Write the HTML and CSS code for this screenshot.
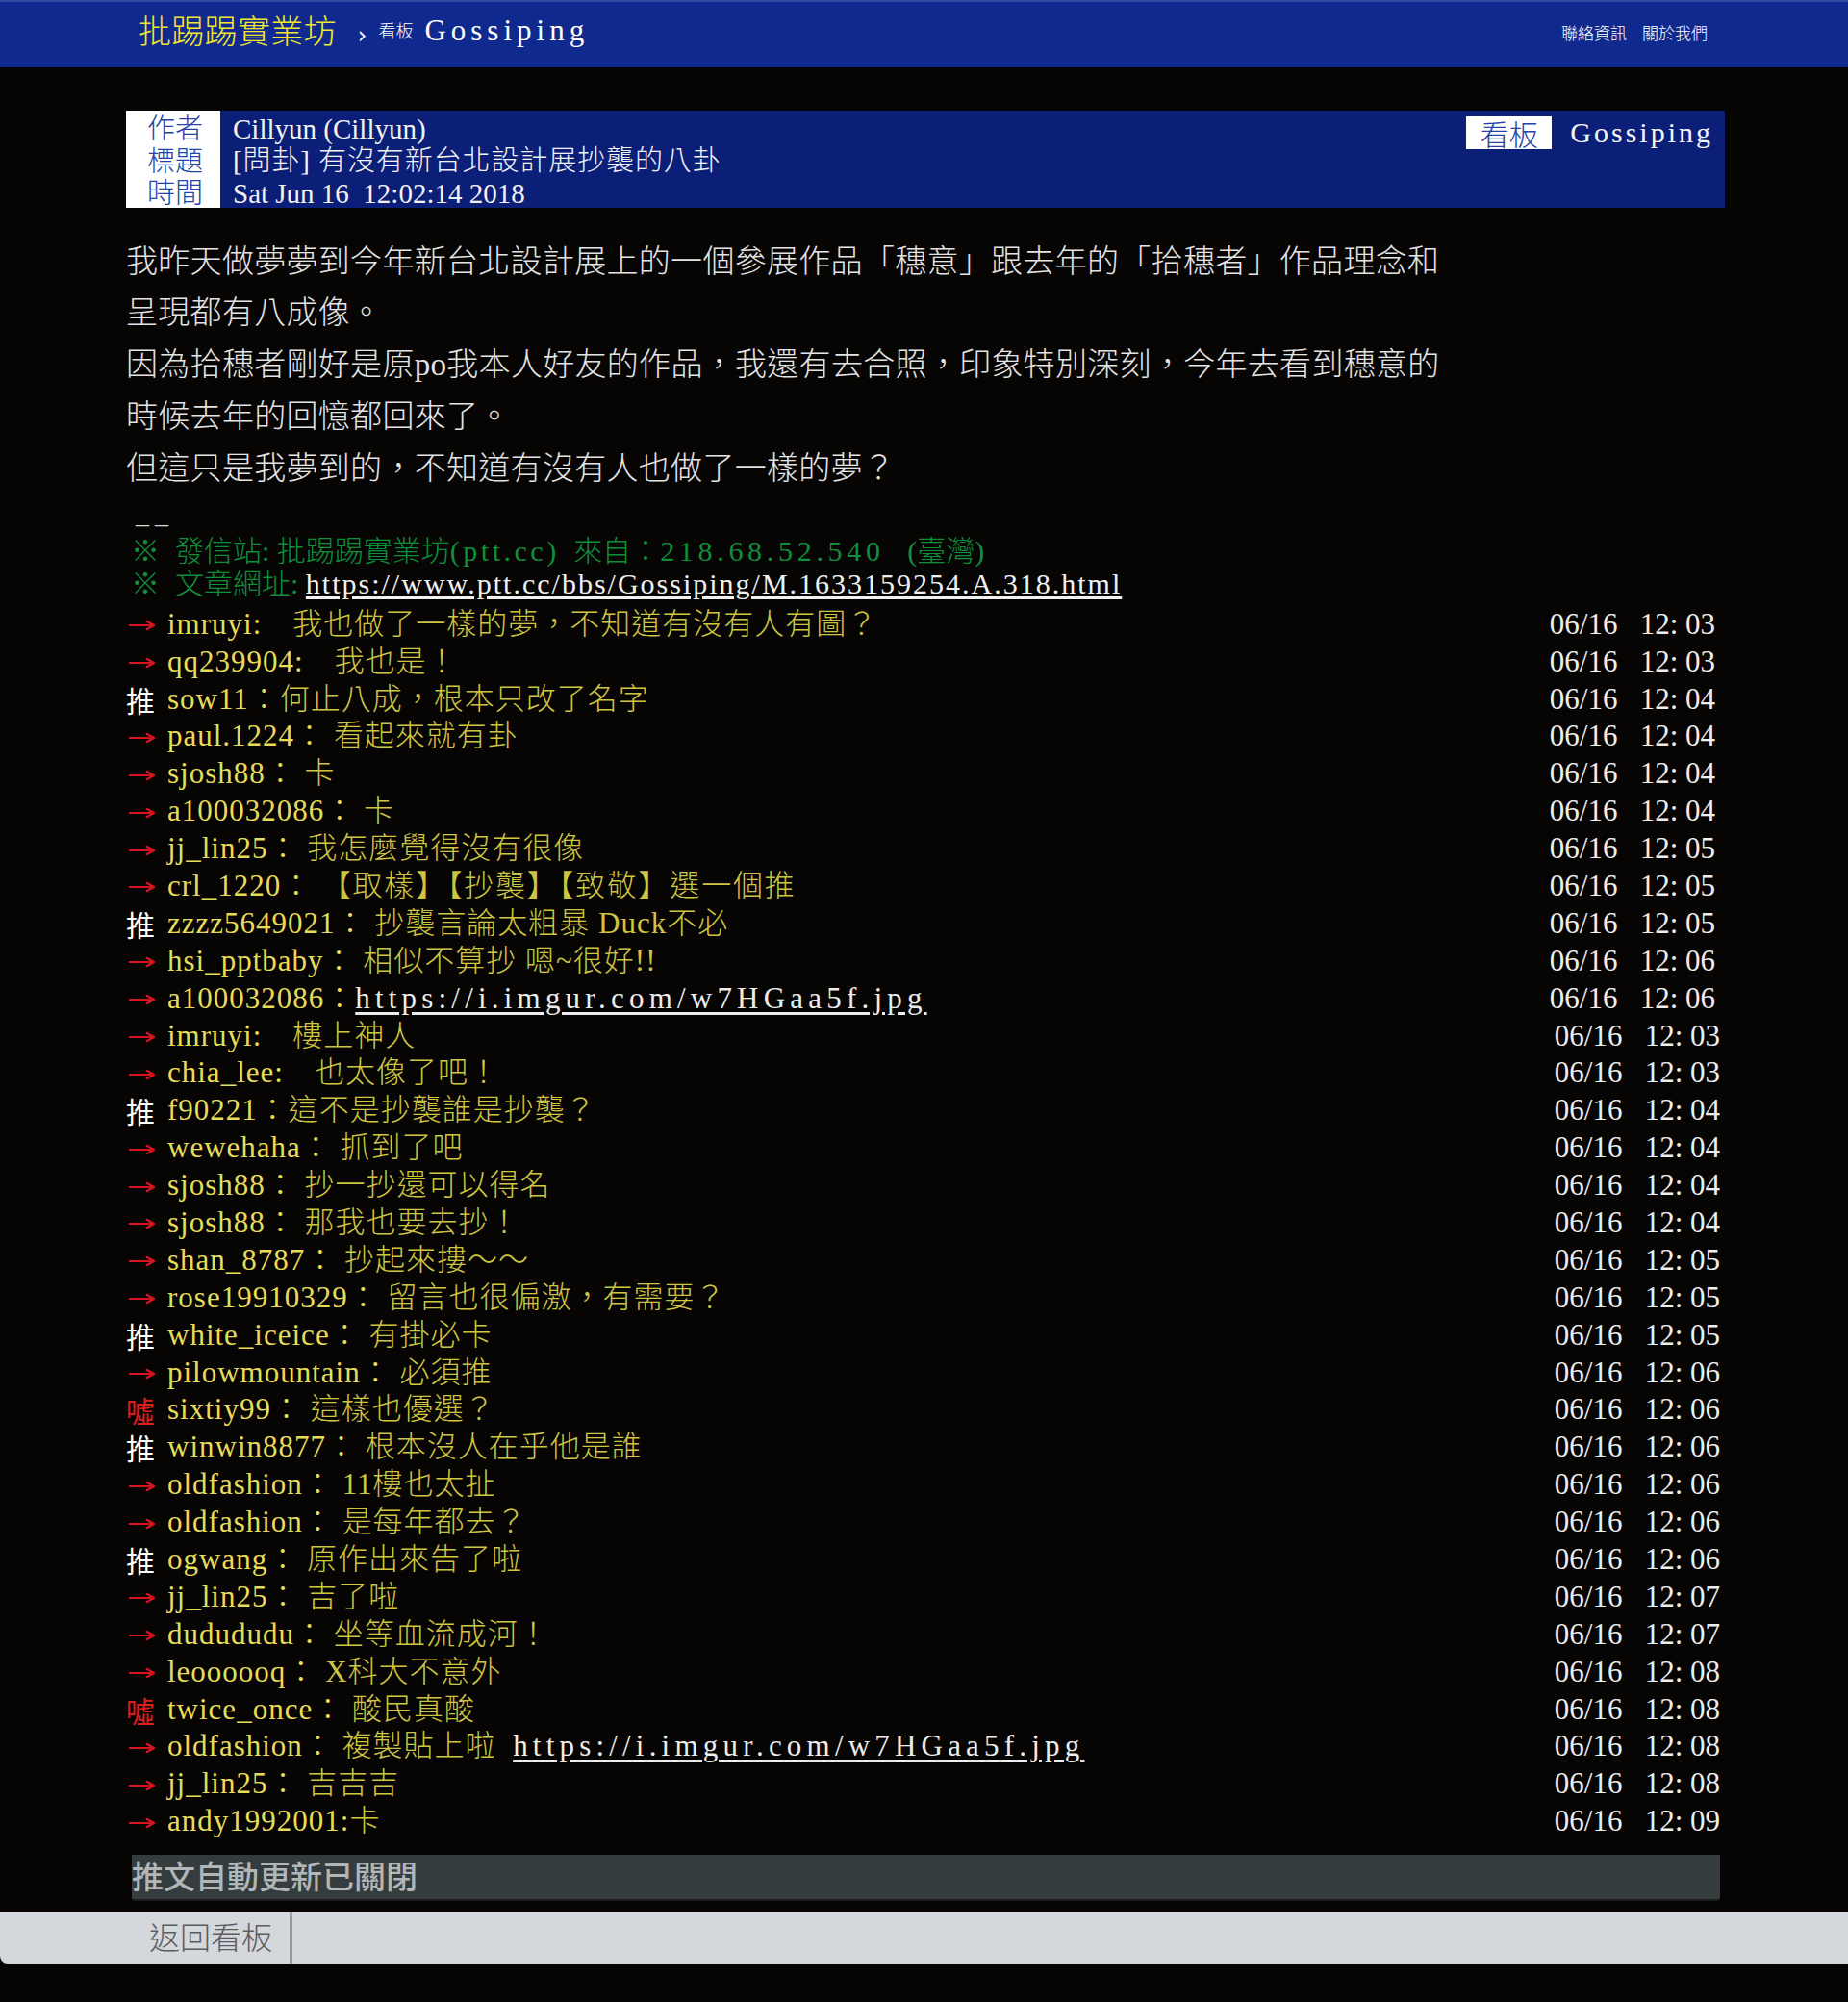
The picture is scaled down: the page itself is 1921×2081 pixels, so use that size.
FILE: index.html
```html
<!DOCTYPE html>
<html lang="zh-Hant">
<head>
<meta charset="utf-8">
<title>[問卦] 有沒有新台北設計展抄襲的八卦 - 看板 Gossiping - 批踢踢實業坊</title>
<link rel="stylesheet" href="styles.css">
</head>
<body>
<div class="topbar">
  <div class="nav-left">
    <span class="brand">批踢踢實業坊</span><span class="crumb-sep">›</span><span class="crumb-label">看板</span><span class="crumb-board">Gossiping</span>
  </div>
  <div class="nav-right">
    <span class="nav-link">聯絡資訊</span>
    <span class="nav-link">關於我們</span>
  </div>
</div>

<div class="main">
  <div class="meta">
    <div class="meta-rows">
      <div class="meta-row"><span class="meta-tag">作者</span><span class="meta-val">Cillyun (Cillyun)</span></div>
      <div class="meta-row"><span class="meta-tag">標題</span><span class="meta-val title">[問卦] 有沒有新台北設計展抄襲的八卦</span></div>
      <div class="meta-row"><span class="meta-tag">時間</span><span class="meta-val">Sat Jun 16  12:02:14 2018</span></div>
    </div>
    <div class="meta-board"><span class="board-tag">看板</span><span class="board-name">Gossiping</span></div>
  </div>

  <div class="content">
    <div class="line">我昨天做夢夢到今年新台北設計展上的一個參展作品「穗意」跟去年的「拾穗者」作品理念和</div>
    <div class="line">呈現都有八成像。</div>
    <div class="line">因為拾穗者剛好是原po我本人好友的作品，我還有去合照，印象特別深刻，今年去看到穗意的</div>
    <div class="line">時候去年的回憶都回來了。</div>
    <div class="line">但這只是我夢到的，不知道有沒有人也做了一樣的夢？</div>
  </div>

  <div class="dashes">––</div>
  <div class="sig sig-1"><span class="sym">※</span>發信站: 批踢踢實業坊<span class="ls3">(ptt.cc)</span> <span class="from">來自：</span><span class="ls4">218.68.52.540</span> <span class="region">(臺灣)</span></div>
  <div class="sig sig-2"><span class="sym">※</span>文章網址: <span class="sig-url">https://www.ptt.cc/bbs/Gossiping/M.1633159254.A.318.html</span></div>

  <div class="pushes">
    <div class="push"><span class="ptag arrow"><svg width="28" height="14" viewBox="0 0 28 14"><path d="M1 7H26M19 2.5L27 7L19 11.5" fill="none" stroke="#d8141e" stroke-width="2.2"/></svg></span><span class="puser">imruyi:　</span><span class="ptext">我也做了一樣的夢，不知道有沒有人有圖？</span><span class="ptime">06/16   12: 03</span></div>
    <div class="push"><span class="ptag arrow"><svg width="28" height="14" viewBox="0 0 28 14"><path d="M1 7H26M19 2.5L27 7L19 11.5" fill="none" stroke="#d8141e" stroke-width="2.2"/></svg></span><span class="puser">qq239904:　</span><span class="ptext">我也是！</span><span class="ptime">06/16   12: 03</span></div>
    <div class="push"><span class="ptag up">推</span><span class="puser">sow11：</span><span class="ptext">何止八成，根本只改了名字</span><span class="ptime">06/16   12: 04</span></div>
    <div class="push"><span class="ptag arrow"><svg width="28" height="14" viewBox="0 0 28 14"><path d="M1 7H26M19 2.5L27 7L19 11.5" fill="none" stroke="#d8141e" stroke-width="2.2"/></svg></span><span class="puser">paul.1224：</span><span class="ptext"> 看起來就有卦</span><span class="ptime">06/16   12: 04</span></div>
    <div class="push"><span class="ptag arrow"><svg width="28" height="14" viewBox="0 0 28 14"><path d="M1 7H26M19 2.5L27 7L19 11.5" fill="none" stroke="#d8141e" stroke-width="2.2"/></svg></span><span class="puser">sjosh88：</span><span class="ptext"> 卡</span><span class="ptime">06/16   12: 04</span></div>
    <div class="push"><span class="ptag arrow"><svg width="28" height="14" viewBox="0 0 28 14"><path d="M1 7H26M19 2.5L27 7L19 11.5" fill="none" stroke="#d8141e" stroke-width="2.2"/></svg></span><span class="puser">a100032086：</span><span class="ptext"> 卡</span><span class="ptime">06/16   12: 04</span></div>
    <div class="push"><span class="ptag arrow"><svg width="28" height="14" viewBox="0 0 28 14"><path d="M1 7H26M19 2.5L27 7L19 11.5" fill="none" stroke="#d8141e" stroke-width="2.2"/></svg></span><span class="puser">jj_lin25：</span><span class="ptext"> 我怎麼覺得沒有很像</span><span class="ptime">06/16   12: 05</span></div>
    <div class="push"><span class="ptag arrow"><svg width="28" height="14" viewBox="0 0 28 14"><path d="M1 7H26M19 2.5L27 7L19 11.5" fill="none" stroke="#d8141e" stroke-width="2.2"/></svg></span><span class="puser">crl_1220：</span><span class="ptext wide"> 【取樣】【抄襲】【致敬】選一個推</span><span class="ptime">06/16   12: 05</span></div>
    <div class="push"><span class="ptag up">推</span><span class="puser">zzzz5649021：</span><span class="ptext"> 抄襲言論太粗暴 Duck不必</span><span class="ptime">06/16   12: 05</span></div>
    <div class="push"><span class="ptag arrow"><svg width="28" height="14" viewBox="0 0 28 14"><path d="M1 7H26M19 2.5L27 7L19 11.5" fill="none" stroke="#d8141e" stroke-width="2.2"/></svg></span><span class="puser">hsi_pptbaby：</span><span class="ptext"> 相似不算抄 嗯~很好!!</span><span class="ptime">06/16   12: 06</span></div>
    <div class="push"><span class="ptag arrow"><svg width="28" height="14" viewBox="0 0 28 14"><path d="M1 7H26M19 2.5L27 7L19 11.5" fill="none" stroke="#d8141e" stroke-width="2.2"/></svg></span><span class="puser">a100032086：</span><span class="ptext"><span class="purl">https://i.imgur.com/w7HGaa5f.jpg</span></span><span class="ptime">06/16   12: 06</span></div>
    <div class="push late"><span class="ptag arrow"><svg width="28" height="14" viewBox="0 0 28 14"><path d="M1 7H26M19 2.5L27 7L19 11.5" fill="none" stroke="#d8141e" stroke-width="2.2"/></svg></span><span class="puser">imruyi:　</span><span class="ptext">樓上神人</span><span class="ptime">06/16   12: 03</span></div>
    <div class="push late"><span class="ptag arrow"><svg width="28" height="14" viewBox="0 0 28 14"><path d="M1 7H26M19 2.5L27 7L19 11.5" fill="none" stroke="#d8141e" stroke-width="2.2"/></svg></span><span class="puser">chia_lee:　</span><span class="ptext">也太像了吧！</span><span class="ptime">06/16   12: 03</span></div>
    <div class="push late"><span class="ptag up">推</span><span class="puser">f90221：</span><span class="ptext">這不是抄襲誰是抄襲？</span><span class="ptime">06/16   12: 04</span></div>
    <div class="push late"><span class="ptag arrow"><svg width="28" height="14" viewBox="0 0 28 14"><path d="M1 7H26M19 2.5L27 7L19 11.5" fill="none" stroke="#d8141e" stroke-width="2.2"/></svg></span><span class="puser">wewehaha：</span><span class="ptext"> 抓到了吧</span><span class="ptime">06/16   12: 04</span></div>
    <div class="push late"><span class="ptag arrow"><svg width="28" height="14" viewBox="0 0 28 14"><path d="M1 7H26M19 2.5L27 7L19 11.5" fill="none" stroke="#d8141e" stroke-width="2.2"/></svg></span><span class="puser">sjosh88：</span><span class="ptext"> 抄一抄還可以得名</span><span class="ptime">06/16   12: 04</span></div>
    <div class="push late"><span class="ptag arrow"><svg width="28" height="14" viewBox="0 0 28 14"><path d="M1 7H26M19 2.5L27 7L19 11.5" fill="none" stroke="#d8141e" stroke-width="2.2"/></svg></span><span class="puser">sjosh88：</span><span class="ptext"> 那我也要去抄！</span><span class="ptime">06/16   12: 04</span></div>
    <div class="push late"><span class="ptag arrow"><svg width="28" height="14" viewBox="0 0 28 14"><path d="M1 7H26M19 2.5L27 7L19 11.5" fill="none" stroke="#d8141e" stroke-width="2.2"/></svg></span><span class="puser">shan_8787：</span><span class="ptext"> 抄起來摟～～</span><span class="ptime">06/16   12: 05</span></div>
    <div class="push late"><span class="ptag arrow"><svg width="28" height="14" viewBox="0 0 28 14"><path d="M1 7H26M19 2.5L27 7L19 11.5" fill="none" stroke="#d8141e" stroke-width="2.2"/></svg></span><span class="puser">rose19910329：</span><span class="ptext"> 留言也很偏激，有需要？</span><span class="ptime">06/16   12: 05</span></div>
    <div class="push late"><span class="ptag up">推</span><span class="puser">white_iceice：</span><span class="ptext"> 有掛必卡</span><span class="ptime">06/16   12: 05</span></div>
    <div class="push late"><span class="ptag arrow"><svg width="28" height="14" viewBox="0 0 28 14"><path d="M1 7H26M19 2.5L27 7L19 11.5" fill="none" stroke="#d8141e" stroke-width="2.2"/></svg></span><span class="puser">pilowmountain：</span><span class="ptext"> 必須推</span><span class="ptime">06/16   12: 06</span></div>
    <div class="push late"><span class="ptag down">噓</span><span class="puser">sixtiy99：</span><span class="ptext"> 這樣也優選？</span><span class="ptime">06/16   12: 06</span></div>
    <div class="push late"><span class="ptag up">推</span><span class="puser">winwin8877：</span><span class="ptext"> 根本沒人在乎他是誰</span><span class="ptime">06/16   12: 06</span></div>
    <div class="push late"><span class="ptag arrow"><svg width="28" height="14" viewBox="0 0 28 14"><path d="M1 7H26M19 2.5L27 7L19 11.5" fill="none" stroke="#d8141e" stroke-width="2.2"/></svg></span><span class="puser">oldfashion：</span><span class="ptext"> 11樓也太扯</span><span class="ptime">06/16   12: 06</span></div>
    <div class="push late"><span class="ptag arrow"><svg width="28" height="14" viewBox="0 0 28 14"><path d="M1 7H26M19 2.5L27 7L19 11.5" fill="none" stroke="#d8141e" stroke-width="2.2"/></svg></span><span class="puser">oldfashion：</span><span class="ptext"> 是每年都去？</span><span class="ptime">06/16   12: 06</span></div>
    <div class="push late"><span class="ptag up">推</span><span class="puser">ogwang：</span><span class="ptext"> 原作出來告了啦</span><span class="ptime">06/16   12: 06</span></div>
    <div class="push late"><span class="ptag arrow"><svg width="28" height="14" viewBox="0 0 28 14"><path d="M1 7H26M19 2.5L27 7L19 11.5" fill="none" stroke="#d8141e" stroke-width="2.2"/></svg></span><span class="puser">jj_lin25：</span><span class="ptext"> 吉了啦</span><span class="ptime">06/16   12: 07</span></div>
    <div class="push late"><span class="ptag arrow"><svg width="28" height="14" viewBox="0 0 28 14"><path d="M1 7H26M19 2.5L27 7L19 11.5" fill="none" stroke="#d8141e" stroke-width="2.2"/></svg></span><span class="puser">dudududu：</span><span class="ptext"> 坐等血流成河！</span><span class="ptime">06/16   12: 07</span></div>
    <div class="push late"><span class="ptag arrow"><svg width="28" height="14" viewBox="0 0 28 14"><path d="M1 7H26M19 2.5L27 7L19 11.5" fill="none" stroke="#d8141e" stroke-width="2.2"/></svg></span><span class="puser">leoooooq：</span><span class="ptext"> X科大不意外</span><span class="ptime">06/16   12: 08</span></div>
    <div class="push late"><span class="ptag down">噓</span><span class="puser">twice_once：</span><span class="ptext"> 酸民真酸</span><span class="ptime">06/16   12: 08</span></div>
    <div class="push late"><span class="ptag arrow"><svg width="28" height="14" viewBox="0 0 28 14"><path d="M1 7H26M19 2.5L27 7L19 11.5" fill="none" stroke="#d8141e" stroke-width="2.2"/></svg></span><span class="puser">oldfashion：</span><span class="ptext"> 複製貼上啦  <span class="purl">https://i.imgur.com/w7HGaa5f.jpg</span></span><span class="ptime">06/16   12: 08</span></div>
    <div class="push late"><span class="ptag arrow"><svg width="28" height="14" viewBox="0 0 28 14"><path d="M1 7H26M19 2.5L27 7L19 11.5" fill="none" stroke="#d8141e" stroke-width="2.2"/></svg></span><span class="puser">jj_lin25：</span><span class="ptext"> 吉吉吉</span><span class="ptime">06/16   12: 08</span></div>
    <div class="push late"><span class="ptag arrow"><svg width="28" height="14" viewBox="0 0 28 14"><path d="M1 7H26M19 2.5L27 7L19 11.5" fill="none" stroke="#d8141e" stroke-width="2.2"/></svg></span><span class="puser">andy1992001:</span><span class="ptext">卡</span><span class="ptime">06/16   12: 09</span></div>
  </div>

  <div class="autoupdate">推文自動更新已關閉</div>
</div>

<div class="bottombar">
  <span class="back-link">返回看板</span>
  <span class="back-sep"></span>
</div>
</body>
</html>
```

FILE: styles.css
```css
html, body {
  margin: 0;
  padding: 0;
}
body {
  background: #070404;
  width: 1921px;
  height: 2081px;
  overflow: hidden;
  font-family: "Liberation Serif", "Noto Sans CJK TC", serif;
  color: #e2e2e2;
}

/* top bar */
.topbar {
  height: 60px;
  padding: 0 146px 8px 144px;
  border-top: 2px solid #2f4a9f;
  background: #10298e;
  display: flex;
  align-items: center;
}
.nav-left {
  white-space: nowrap;
  padding-bottom: 3px;
}
.brand {
  font-family: "Noto Sans CJK TC", sans-serif;
  font-weight: 300;
  font-size: 34px;
  color: #f2e62e;
  letter-spacing: 0.3px;
}
.crumb-sep {
  font-family: "DejaVu Sans", sans-serif;
  font-size: 24px;
  color: #ffffff;
  margin-left: 22px;
}
.crumb-label {
  font-family: "Noto Sans CJK TC", sans-serif;
  font-weight: 300;
  font-size: 18px;
  color: #ffffff;
  margin-left: 12px;
  vertical-align: 6px;
}
.crumb-board {
  font-size: 31px;
  color: #ffffff;
  letter-spacing: 5px;
  margin-left: 12px;
  vertical-align: 3px;
}
.nav-right {
  margin-left: auto;
  display: flex;
  gap: 16px;
  padding-top: 2px;
}
.nav-link {
  font-family: "Noto Sans CJK TC", sans-serif;
  font-weight: 300;
  font-size: 17px;
  color: #ffffff;
}

/* main */
.main {
  margin-left: 131px;
  width: 1662px;
  padding-top: 45px;
}

.meta {
  display: flex;
  align-items: flex-start;
  background: #0c1f78;
}
.meta-rows {
  display: flex;
  flex-direction: column;
}
.meta-row {
  display: flex;
  height: 33.5px;
  line-height: 33.5px;
  font-size: 29px;
}
.meta-tag {
  width: 98px;
  box-sizing: border-box;
  padding-left: 4px;
  padding-top: 3px;
  background: #ffffff;
  color: #2543a8;
  text-align: center;
  font-family: "Liberation Serif", "Noto Sans CJK TC", sans-serif;
  font-weight: 300;
}
.meta-val {
  margin-left: 13px;
  padding-top: 3px;
  color: #f2f2f2;
  white-space: pre;
  font-family: "Liberation Serif", "Noto Sans CJK TC", serif;
  font-weight: 300;
}
.meta-val.title {
  padding-top: 2px;
  letter-spacing: 0.9px;
}
.meta-board {
  margin-left: auto;
  margin-top: 6px;
  padding-right: 12px;
  display: flex;
  align-items: center;
}
.board-tag {
  width: 89px;
  height: 34px;
  line-height: 34px;
  background: #ffffff;
  color: #2543a8;
  text-align: center;
  font-family: "Noto Sans CJK TC", sans-serif;
  font-weight: 300;
  font-size: 30px;
}
.board-name {
  margin-left: 19px;
  font-size: 30px;
  letter-spacing: 3px;
  color: #f4f4f4;
}

/* article body */
.content {
  margin-top: 30px;
  font-size: 33px;
  line-height: 53.75px;
  letter-spacing: 0.3px;
  color: #e4e4e4;
  font-weight: 300;
}
.line {
  white-space: nowrap;
}

.dashes {
  margin-top: 18px;
  height: 24px;
  line-height: 24px;
  padding-left: 10px;
  font-family: "Liberation Serif", serif;
  font-size: 28px;
  letter-spacing: 6px;
  color: #d8d8d8;
}
.sig {
  font-size: 30px;
  color: #0f8f3a;
  white-space: nowrap;
  padding-left: 5px;
  font-weight: 300;
}
.sig-1 {
  height: 33px;
  line-height: 33px;
}
.sig-2 {
  height: 36px;
  line-height: 36px;
}
.sym {
  margin-right: 16px;
}
.ls3 {
  letter-spacing: 3.5px;
}
.ls4 {
  letter-spacing: 4.7px;
}
.from {
  margin-left: 7px;
}
.region {
  margin-left: 16px;
}
.sig-url {
  color: #f0f0f0;
  text-decoration: underline;
  text-underline-offset: 3px;
  letter-spacing: 2px;
}

/* pushes */
.pushes {
  margin-top: 4.5px;
}
.push {
  display: flex;
  align-items: center;
  height: 38.9px;
  line-height: 38.9px;
  font-size: 31px;
  white-space: pre;
  padding-right: 10px;
  font-weight: 300;
}
.push.late {
  padding-right: 5px;
}
.ptag {
  width: 43px;
  flex: none;
  display: flex;
  align-items: center;
}
.ptag.arrow svg {
  display: block;
  margin-left: 2px;
  margin-top: 2px;
}
.ptag.up,
.ptag.down {
  font-family: "Liberation Serif", "Noto Sans CJK TC", sans-serif;
  font-size: 30px;
  font-weight: 400;
  margin-top: 6px;
}
.ptag.up {
  color: #ffffff;
}
.ptag.down {
  color: #e01c1c;
}
.puser {
  color: #e6dc58;
  letter-spacing: 1px;
}
.ptext {
  color: #cec540;
  letter-spacing: 1px;
}
.ptext.wide {
  letter-spacing: 1.8px;
}
.purl {
  color: #ececec;
  text-decoration: underline;
  text-underline-offset: 4px;
  letter-spacing: 5.2px;
}
.ptime {
  margin-left: auto;
  color: #eeeeee;
  font-family: "Liberation Serif", serif;
}

.autoupdate {
  margin-top: 14.5px;
  margin-left: 6px;
  width: 1651px;
  height: 46px;
  box-sizing: border-box;
  padding-bottom: 3px;
  line-height: 43px;
  background: #343c3e;
  color: #b2b6b8;
  font-family: "Noto Sans CJK TC", sans-serif;
  font-size: 33px;
  font-weight: 500;
  box-shadow: 0 3px 0 -1px #1c1c1c;
}

.bottombar {
  margin-top: 13px;
  height: 54px;
  background: #d4d7dc;
  border-bottom-left-radius: 8px;
  display: flex;
  align-items: stretch;
}
.back-link {
  margin-left: 155px;
  line-height: 50px;
  font-family: "Noto Sans CJK TC", sans-serif;
  font-weight: 300;
  font-size: 32px;
  color: #5a5c60;
}
.back-sep {
  width: 3px;
  margin-left: 18px;
  background: #9c9fa4;
}
```
